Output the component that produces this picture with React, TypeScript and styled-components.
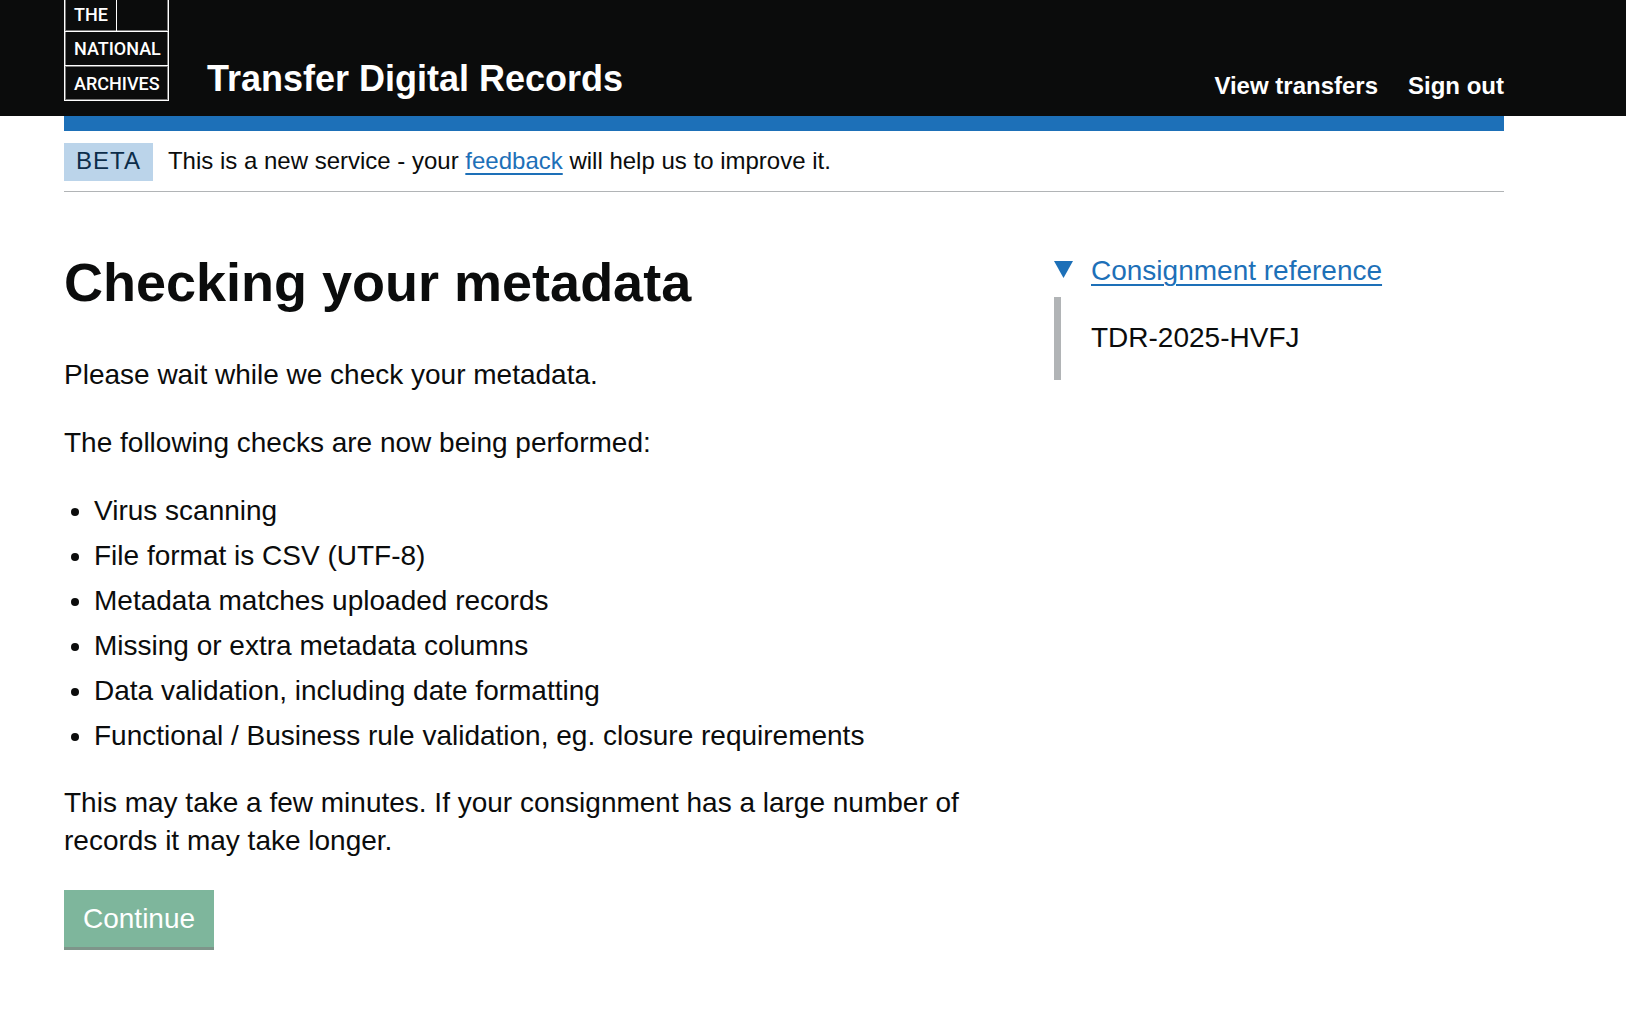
import React from "react";
import styled, { createGlobalStyle } from "styled-components";

const ink = "#0b0c0c";
const blue = "#1d70b8";
const grey = "#b1b4b6";

const GlobalStyle = createGlobalStyle`
  *, *::before, *::after { box-sizing: border-box; }
  body {
    margin: 0;
    background: #fff;
    color: ${ink};
    font-family: "Liberation Sans", Arial, sans-serif;
    font-size: 28px;
    line-height: 38px;
  }
`;

const Container = styled.div`
  max-width: 1568px;
  padding-left: 64px;
  padding-right: 64px;
`;

const Header = styled.header`
  background: ${ink};
  color: #fff;
`;

const HeaderRow = styled(Container)`
  display: flex;
  align-items: flex-end;
`;

const LogoLink = styled.a`
  display: block;
  margin-right: 38px;
  padding-bottom: 15px;
`;

const LogoSvg = styled.svg`
  display: block;
`;

const ServiceName = styled.a`
  color: #fff;
  font-size: 36px;
  font-weight: 700;
  line-height: 40px;
  padding-bottom: 17px;
  text-decoration: none;
`;

const Nav = styled.nav`
  display: flex;
  gap: 30px;
  margin-left: auto;
  padding-bottom: 15px;
`;

const NavLink = styled.a`
  color: #fff;
  font-size: 24px;
  font-weight: 700;
  line-height: 30px;
  text-decoration: none;
`;

const BlueBar = styled.div`
  height: 15px;
  background: ${blue};
`;

const PhaseBanner = styled.div`
  display: flex;
  align-items: flex-start;
  gap: 15px;
  padding: 12px 0 10px;
  border-bottom: 1px solid ${grey};
  font-size: 24px;
  line-height: 36px;
`;

const PhaseTag = styled.strong`
  padding: 0 12px 2px;
  background: #bbd4ea;
  color: #0c2d4a;
  font-weight: 400;
  letter-spacing: 1px;
  text-transform: uppercase;
`;

const Link = styled.a`
  color: ${blue};
  text-decoration: underline;
  text-decoration-thickness: 2px;
  text-underline-offset: 4px;
`;

const Main = styled.main`
  display: grid;
  grid-template-columns: minmax(0, 945fr) minmax(0, 450fr);
  column-gap: 45px;
  padding: 60px 0;
`;

const Heading = styled.h1`
  margin: 0 0 44px;
  font-size: 54px;
  font-weight: 700;
  line-height: 60px;
`;

const Paragraph = styled.p`
  margin: 0 0 30px;
`;

const CheckList = styled.ul`
  display: flex;
  flex-direction: column;
  gap: 7px;
  margin: 0 0 29px;
  padding-left: 30px;
`;

const Button = styled.button`
  display: block;
  padding: 10px 19px 9px;
  border: 0;
  background: #00703c;
  box-shadow: 0 3px 0 #002d18;
  color: #fff;
  font: inherit;
  opacity: 0.5;
`;

const Summary = styled.summary`
  display: flex;
  align-items: flex-start;
  gap: 18px;
  color: ${blue};
  list-style: none;
  cursor: pointer;
  &::-webkit-details-marker { display: none; }
`;

const Arrow = styled.span`
  width: 19px;
  height: 17px;
  margin-top: 9px;
  background: ${blue};
  clip-path: polygon(0 0, 100% 0, 50% 100%);
`;

const SummaryText = styled.span`
  text-decoration: underline;
  text-decoration-thickness: 2px;
  text-underline-offset: 4px;
`;

const DetailsText = styled.div`
  margin-top: 7px;
  padding: 22px 30px 23px;
  border-left: 7px solid ${grey};
`;

const checks = [
  "Virus scanning",
  "File format is CSV (UTF-8)",
  "Metadata matches uploaded records",
  "Missing or extra metadata columns",
  "Data validation, including date formatting",
  "Functional / Business rule validation, eg. closure requirements",
];

function Logo() {
  return (
    <LogoSvg width="105" height="101" viewBox="0 0 105 101" role="img" aria-label="The National Archives">
      <g fill="#fff">
        <path d="M0 0h1v101H0zM104 0h1v101h-1zM52 0h1v31h-1zM0 31h105v1H0zM0 65h105v1H0zM0 100h105v1H0z" />
        <path opacity="0.45" d="M1 0h1v100H1zM103 0h1v100h-1zM1 30h103v1H1zM1 66h103v1H1zM1 99h103v1H1z" />
      </g>
      <g fill="#fff" fontFamily="Roboto, sans-serif" fontSize="18" fontWeight="500">
        <text x="10" y="21">THE</text>
        <text x="10" y="55">NATIONAL</text>
        <text x="10" y="90">ARCHIVES</text>
      </g>
    </LogoSvg>
  );
}

export default function App() {
  return (
    <>
      <GlobalStyle />
      <Header>
        <HeaderRow>
          <LogoLink href="#"><Logo /></LogoLink>
          <ServiceName href="#">Transfer Digital Records</ServiceName>
          <Nav>
            <NavLink href="#">View transfers</NavLink>
            <NavLink href="#">Sign out</NavLink>
          </Nav>
        </HeaderRow>
      </Header>
      <Container>
        <BlueBar />
        <PhaseBanner>
          <PhaseTag>Beta</PhaseTag>
          <span>
            This is a new service - your <Link href="#">feedback</Link> will help us to improve it.
          </span>
        </PhaseBanner>
        <Main>
          <section>
            <Heading>Checking your metadata</Heading>
            <Paragraph>Please wait while we check your metadata.</Paragraph>
            <Paragraph>The following checks are now being performed:</Paragraph>
            <CheckList>
              {checks.map((check) => (
                <li key={check}>{check}</li>
              ))}
            </CheckList>
            <Paragraph>
              This may take a few minutes. If your consignment has a large number of records it may take longer.
            </Paragraph>
            <Button type="button" disabled>Continue</Button>
          </section>
          <aside>
            <details open>
              <Summary>
                <Arrow />
                <SummaryText>Consignment reference</SummaryText>
              </Summary>
              <DetailsText>TDR-2025-HVFJ</DetailsText>
            </details>
          </aside>
        </Main>
      </Container>
    </>
  );
}
